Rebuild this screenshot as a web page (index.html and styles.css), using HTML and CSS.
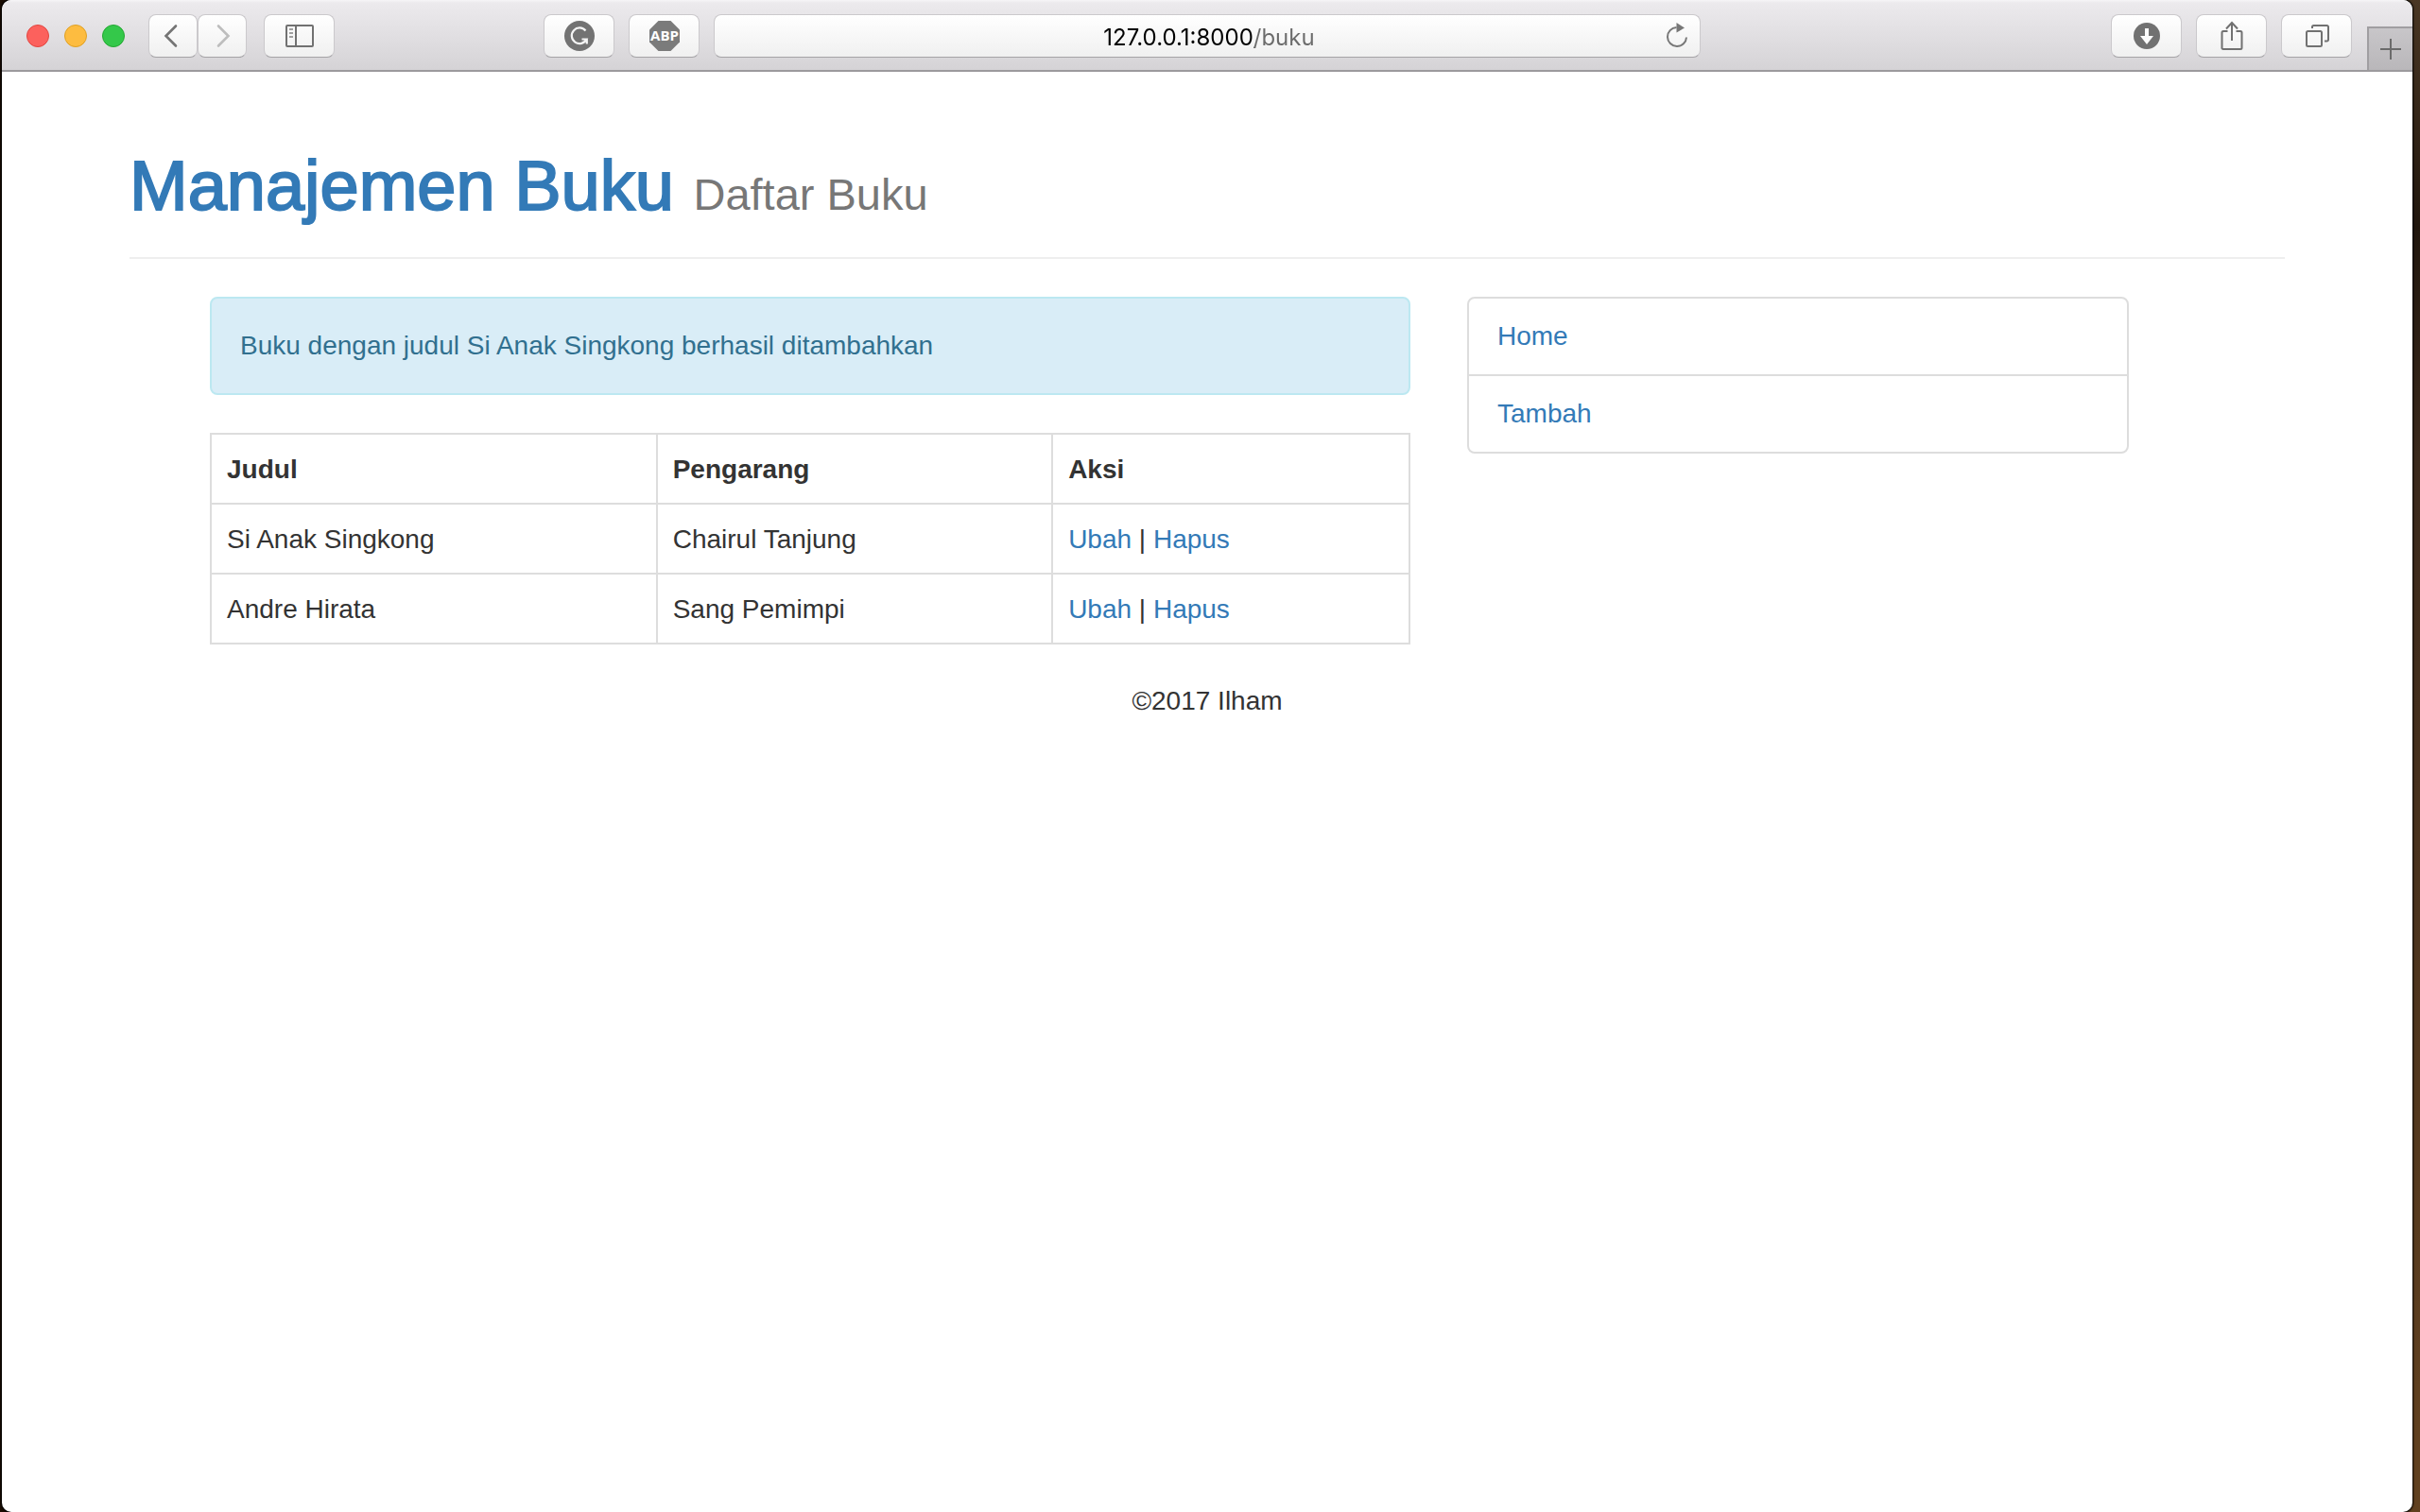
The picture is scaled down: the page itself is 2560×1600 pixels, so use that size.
FILE: index.html
```html
<!DOCTYPE html>
<html lang="id">
<head>
<meta charset="utf-8">
<title>Manajemen Buku</title>
<meta name="viewport" content="width=device-width, initial-scale=1">
<link rel="stylesheet" href="styles.css">
</head>
<body>
<div class="window">
  <header class="toolbar">
    <div class="toolbar-left">
      <div class="lights">
        <button class="light light-close" type="button" aria-label="Close"></button>
        <button class="light light-minimize" type="button" aria-label="Minimize"></button>
        <button class="light light-zoom" type="button" aria-label="Zoom"></button>
      </div>
      <div class="history">
        <button class="tool tool-half" type="button" aria-label="Back">
          <svg width="50" height="44" viewBox="0 0 50 44"><path d="M28 11.500 17.500 22 28 32.500" fill="none" stroke="#747474" stroke-width="2.600" stroke-linecap="round"/></svg>
        </button>
        <button class="tool tool-half" type="button" aria-label="Forward">
          <svg width="50" height="44" viewBox="0 0 50 44"><path d="M21 11.500 31.500 22 21 32.500" fill="none" stroke="#bdbdbd" stroke-width="2.600" stroke-linecap="round"/></svg>
        </button>
      </div>
      <button class="tool" type="button" aria-label="Sidebar">
        <svg width="30" height="24" viewBox="0 0 30 24"><g fill="none" stroke="#717171" stroke-width="2"><rect x="1" y="1" width="28" height="22" rx="1"/><path d="M11 1v22"/><path d="M4 5h4M4 9h4M4 13h4" stroke="#a0a0a0"/></g></svg>
      </button>
      <div class="extensions">
        <button class="tool" type="button" aria-label="Grammarly">
          <svg width="32" height="32" viewBox="0 0 32 32"><circle cx="16" cy="16" r="16" fill="#737373"/><path d="M22.500 10.500A8.300 8.300 0 1 0 23.500 19.500H18.500M23.800 18.500V24.500" fill="none" stroke="#f4f4f4" stroke-width="2.200"/></svg>
        </button>
        <button class="tool" type="button" aria-label="Adblock Plus">
          <svg width="32" height="32" viewBox="0 0 32 32"><path d="M9.500 0h13L32 9.500v13L22.500 32h-13L0 22.500v-13z" fill="#7b7b7b"/><text class="abp" x="16" y="21" text-anchor="middle">ABP</text></svg>
        </button>
      </div>
    </div>
    <div class="address">
      <input class="address-input" type="text" value="127.0.0.1:8000/buku" aria-label="Address">
      <button class="reload" type="button" aria-label="Reload">
        <svg width="26" height="28" viewBox="0 0 26 28"><path d="M13.500 5A10 10 0 1 0 24 15.500" fill="none" stroke="#777" stroke-width="2"/><path d="M13.500 0v10.500L22 5.500z" fill="#777"/></svg>
      </button>
    </div>
    <div class="toolbar-right">
      <button class="tool" type="button" aria-label="Downloads">
        <svg width="28" height="28" viewBox="0 0 28 28"><circle cx="14" cy="14" r="14" fill="#717171"/><path d="M12 6h4v8h5l-7 9-7-9h5z" fill="#fafafa"/></svg>
      </button>
      <button class="tool" type="button" aria-label="Share">
        <svg width="24" height="32" viewBox="0 0 24 32"><g fill="none" stroke="#717171" stroke-width="2"><path d="M7.500 11H3a1.500 1.500 0 0 0-1.500 1.500V28A1.500 1.500 0 0 0 3 30h18a1.500 1.500 0 0 0 1.500-1.500V12.500A1.500 1.500 0 0 0 21 11h-4.500M12 21V2M6 8.500l6-6.500 6 6.500"/></g></svg>
      </button>
      <button class="tool" type="button" aria-label="Tab overview">
        <svg width="26" height="24" viewBox="0 0 26 24"><g fill="none" stroke="#717171" stroke-width="2"><rect x="2" y="7" width="16" height="16" rx="1.500"/><path d="M8 4V2.500A1.500 1.500 0 0 1 9.500 1H23.500A1.500 1.500 0 0 1 25 2.500V16A1.500 1.500 0 0 1 23.500 17.500H21"/></g></svg>
      </button>
      <button class="new-tab" type="button" aria-label="New tab">
        <svg width="22" height="22" viewBox="0 0 22 22"><path d="M11 0v22M0 11h22" stroke="#6b6b6b" stroke-width="2"/></svg>
      </button>
    </div>
  </header>
  <main class="container">
    <div class="page-header">
      <h1><a href="#">Manajemen Buku</a> <small>Daftar Buku</small></h1>
    </div>
    <div class="row">
      <section class="col">
        <div class="alert" role="status">Buku dengan judul Si Anak Singkong berhasil ditambahkan</div>
        <table class="books">
          <thead>
            <tr><th class="col-title">Judul</th><th class="col-author">Pengarang</th><th>Aksi</th></tr>
          </thead>
          <tbody>
            <tr><td>Si Anak Singkong</td><td>Chairul Tanjung</td><td><a href="#">Ubah</a> | <a href="#">Hapus</a></td></tr>
            <tr><td>Andre Hirata</td><td>Sang Pemimpi</td><td><a href="#">Ubah</a> | <a href="#">Hapus</a></td></tr>
          </tbody>
        </table>
      </section>
      <nav class="col">
        <ul class="list-group">
          <li><a href="#">Home</a></li>
          <li><a href="#">Tambah</a></li>
        </ul>
      </nav>
    </div>
    <footer class="footer">©2017 Ilham</footer>
  </main>
</div>
</body>
</html>
```
FILE: styles.css
```css
* { box-sizing: border-box; }

body {
  margin: 0;
  min-height: 100vh;
  display: flex;
  padding: 0 8px 0 2px;
  background: linear-gradient(90deg, #1a0d03 50%, transparent 50%),
    linear-gradient(#4a3724 0, #20160d 15%, #3a291c 30%, #60401f 95%);
  color: #333;
  font-family: "Helvetica Neue", "Liberation Sans", Arial, sans-serif;
  font-size: 28px;
  line-height: 40px;
}

a { color: #337ab7; text-decoration: none; }
button { margin: 0; padding: 0; border: 0; }
svg { display: block; }

.window {
  flex: 1;
  min-width: 0;
  border-radius: 10px;
  overflow: hidden;
  background: #fff;
  box-shadow: 0 0 2px 1px #000;
}

/* Browser toolbar */
.toolbar {
  display: grid;
  grid-template-columns: minmax(0, 1fr) minmax(0, 1044px) minmax(0, 1fr);
  height: 76px;
  border-bottom: 2px solid #9c9a9d;
  background: linear-gradient(#f6f5f7 0, #eceaed 3px, #d5d3d6 100%);
}
.toolbar-left, .toolbar-right { display: flex; }
.toolbar-left { padding: 15px 15px 0 26px; }
.toolbar-right { justify-content: flex-end; gap: 15px; padding-top: 15px; }

.lights { display: flex; gap: 16px; padding-top: 11px; margin-right: 25px; }
.light { width: 24px; height: 24px; border-radius: 50%; }
.light-close { background: #fc615d; border: 1px solid #e14640; }
.light-minimize { background: #fdbc40; border: 1px solid #dfa023; }
.light-zoom { background: #34c84a; border: 1px solid #24a732; }

.tool, .address {
  height: 46px;
  border: 1px solid #cbc9cc;
  border-bottom-color: #a5a3a6;
  border-radius: 8px;
  background: linear-gradient(#fff, #f0f0f0);
}
.tool { display: flex; align-items: center; justify-content: center; width: 75px; }
.tool-half { width: 52px; }
.history { display: flex; margin-right: 18px; }
.extensions { display: flex; gap: 15px; margin-left: auto; }
.abp { font: bold 15px "Open Sans", sans-serif; fill: #fff; }

.address { display: flex; align-items: center; margin-top: 15px; padding: 0 12px 0 42px; }
.address-input {
  flex: 1;
  min-width: 0;
  height: 42px;
  padding: 2px 0 0;
  border: 0;
  outline: 0;
  text-align: center;
  font: 24px "Inter", sans-serif;
  color: transparent;
  background: linear-gradient(90deg, #000 calc(50% + 48px), #6b6b6b calc(50% + 48px));
  -webkit-background-clip: text;
  background-clip: text;
}
.reload { background: none; }

.new-tab {
  display: flex;
  align-items: center;
  justify-content: center;
  width: 48px;
  margin: 13px 0 0 1px;
  border-top: 2px solid #a09ea1;
  border-left: 2px solid #a09ea1;
  background: linear-gradient(#c8c6c9, #b9b7ba);
}

/* Page */
.container { max-width: 2340px; margin: 0 auto; padding: 0 30px; }
.page-header { margin: 81px 0 40px; padding-bottom: 35px; border-bottom: 2px solid #eee; }
h1 {
  margin: 0;
  font-size: 74px;
  font-weight: 400;
  line-height: 80px;
  -webkit-text-stroke: 2px #337ab7;
}
h1 small { font-size: 47px; line-height: 1; color: #777; -webkit-text-stroke: 0; }

.row { display: grid; grid-template-columns: 7fr 4fr; margin: 0 135px 0 55px; }
.col { min-width: 0; padding: 0 30px; }

.alert {
  margin-bottom: 40px;
  padding: 30px;
  border: 2px solid #bce8f1;
  border-radius: 8px;
  background: #d9edf7;
  color: #31708f;
}

.books {
  width: 100%;
  margin-bottom: 40px;
  table-layout: fixed;
  border-collapse: collapse;
}
.books th, .books td { padding: 17px 16px 15px; border: 2px solid #ddd; text-align: left; }
.col-title { width: 37.2%; }
.col-author { width: 33%; }

.list-group {
  margin: 0;
  padding: 0;
  border: 2px solid #ddd;
  border-radius: 8px;
  list-style: none;
}
.list-group a { display: block; padding: 20px 30px; }
.list-group li + li { border-top: 2px solid #ddd; }

.footer { text-align: center; }
```
